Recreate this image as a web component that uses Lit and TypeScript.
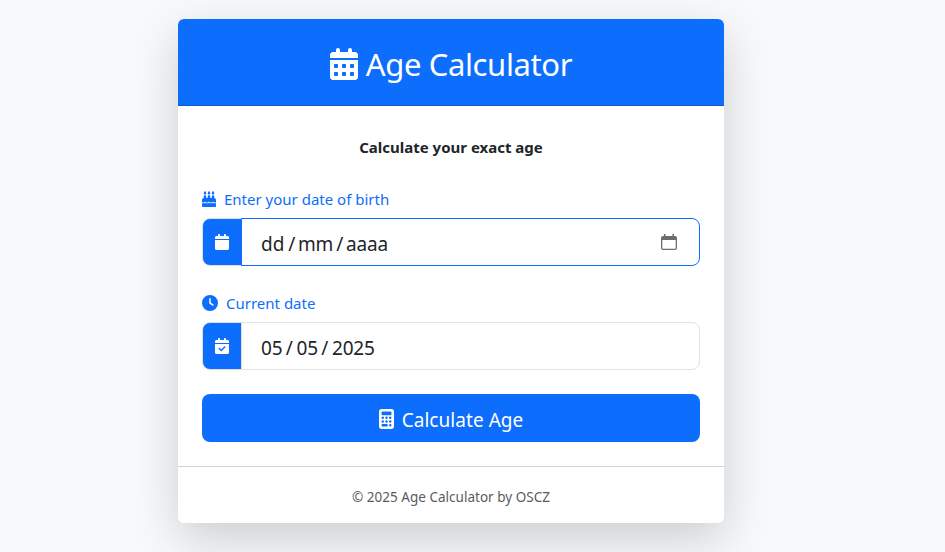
import { LitElement, html, css, svg } from "lit";
import { customElement, property } from "lit/decorators.js";

const calendarTop =
  "M128 0c17.7 0 32 14.3 32 32V64H288V32c0-17.7 14.3-32 32-32s32 14.3 32 32V64h48c26.5 0 48 21.5 48 48v48H0V112C0 85.5 21.5 64 48 64H96V32c0-17.7 14.3-32 32-32z";
const calendarPage = "M0 192H448V464c0 26.5-21.5 48-48 48H48c-26.5 0-48-21.5-48-48V192z";
const cell = (x: number, y: number) =>
  `M${x} ${y + 16}v32c0 8.8 7.2 16 16 16h32c8.8 0 16-7.2 16-16v-32c0-8.8-7.2-16-16-16h-32c-8.8 0-16 7.2-16 16z`;
const dot = (x: number, y: number) => `M${x - 32} ${y}a32 32 0 1 0 64 0a32 32 0 1 0-64 0z`;
const flame = (x: number) =>
  `M${x - 9.6} 5.5L${x - 34.2} 47.6c-3.8 6.5-5.8 14-5.8 21.6V72c0 22.1 17.9 40 40 40s40-17.9 40-40V69.2c0-7.6-2-15-5.8-21.6L${x + 9.6} 5.5C${x + 7.6} 2.1 ${x + 4} 0 ${x} 0s-7.6 2.1-9.6 5.5z`;

const ICONS: Record<string, { w: number; d: string }> = {
  days: {
    w: 448,
    d: calendarTop + calendarPage + [64, 192, 320].map((x) => cell(x, 256) + cell(x, 384)).join(""),
  },
  calendar: { w: 448, d: calendarTop + calendarPage },
  check: {
    w: 448,
    d:
      calendarTop +
      calendarPage +
      "M329 305c9.4-9.4 9.4-24.6 0-33.9s-24.6-9.4-33.9 0l-95 95-47-47c-9.4-9.4-24.6-9.4-33.9 0s-9.4 24.6 0 33.9l64 64c9.4 9.4 24.6 9.4 33.9 0L329 305z",
  },
  clock: {
    w: 512,
    d: "M256 0a256 256 0 1 1 0 512A256 256 0 1 1 256 0zM232 120V256c0 8 4 15.5 10.7 20l96 64c11 7.4 25.9 4.4 33.3-6.7s4.4-25.9-6.7-33.3L280 243.2V120c0-13.3-10.7-24-24-24s-24 10.7-24 24z",
  },
  cake: {
    w: 448,
    d:
      flame(96) +
      flame(224) +
      flame(352) +
      "M136 172c0-20-18-36-40-36s-40 16-40 36v52c-31 4-56 30-56 64v71c8.3 5.2 18.1 9 28.8 9c22 0 42-10 55.2-18.5c6.5-4.5 17.5-4.5 24 0C118 357 139 368 160 368s42-11 52-18.5c6.5-4.5 17.5-4.5 24 0C246 357 267 368 288 368s42-11 52-18.5c6.5-4.5 17.5-4.5 24 0C377 358 397 368 419.2 368c10.7 0 20.5-3.8 28.8-9V288c0-34-25-60-56-64V172c0-20-18-36-40-36s-40 16-40 36v52H264V172c0-20-18-36-40-36s-40 16-40 36v52H136V172z" +
      "M448 390c-8.5 3.3-18.2 5.4-28.8 5.4c-28 0-51-10-67.2-20C336 385 313 395.4 288 395.4s-48-10-64-20C208 385 185 395.4 160 395.4s-48-10-64-20C79.8 385 56.8 395.4 28.8 395.4C18.2 395.4 8.5 393.3 0 390V480c0 17.7 14.3 32 32 32H416c17.7 0 32-14.3 32-32V390z",
  },
  calculator: {
    w: 384,
    d:
      "M64 0C28.7 0 0 28.7 0 64V448c0 35.3 28.7 64 64 64H320c35.3 0 64-28.7 64-64V64c0-35.3-28.7-64-64-64H64zM96 64H288c17.7 0 32 14.3 32 32v32c0 17.7-14.3 32-32 32H96c-17.7 0-32-14.3-32-32V96c0-17.7 14.3-32 32-32z" +
      "M64 416c0-17.7 14.3-32 32-32h96c17.7 0 32 14.3 32 32s-14.3 32-32 32H96c-17.7 0-32-14.3-32-32z" +
      dot(96, 224) + dot(192, 224) + dot(288, 224) + dot(96, 320) + dot(192, 320) + dot(288, 320) + dot(288, 416),
  },
};

@customElement("fa-icon")
export class FaIcon extends LitElement {
  @property() name = "calendar";

  static styles = css`
    :host {
      display: inline-flex;
      flex: none;
      height: 1em;
    }
    svg {
      display: block;
      height: 1em;
      fill: currentColor;
    }
  `;

  render() {
    const icon = ICONS[this.name];
    return html`<svg viewBox="0 0 ${icon.w} 512" width="${icon.w / 512}em" aria-hidden="true">
      ${svg`<path fill-rule="evenodd" d=${icon.d}></path>`}
    </svg>`;
  }
}

@customElement("app-root")
export class AppRoot extends LitElement {
  static styles = css`
    :host {
      display: flow-root;
      box-sizing: border-box;
      height: 552px;
      overflow: hidden;
      background: #f8f9fa;
      color: #212529;
      font-family: "Noto Sans", sans-serif;
      font-size: 16px;
      line-height: 24px;
    }
    * {
      box-sizing: border-box;
    }
    .card {
      width: 546px;
      margin: 19px 0 0 178px;
      background: #fff;
      border-radius: 6px;
      box-shadow: 0 16px 48px rgba(0, 0, 0, 0.175);
      white-space: nowrap;
    }
    .head {
      display: flex;
      justify-content: center;
      align-items: center;
      gap: 8px;
      height: 87px;
      padding-top: 4px;
      border-bottom: 1px solid #0a58ca;
      border-radius: 6px 6px 0 0;
      background: #0d6efd;
      color: #fff;
      font-size: 32px;
    }
    h1 {
      margin: 0;
      font-size: 31px;
      font-weight: 400;
      line-height: 38px;
      letter-spacing: -0.38px;
    }
    .body {
      height: 360px;
      padding: 29px 24px 24px;
    }
    .lead {
      margin: 0 0 28px;
      text-align: center;
      font-size: 15px;
      font-weight: 700;
    }
    .label {
      display: flex;
      align-items: center;
      gap: 8px;
      height: 24px;
      margin-bottom: 7px;
      color: #0d6efd;
    }
    .label span {
      font-size: 15px;
    }
    .group {
      display: flex;
      height: 48px;
      margin-bottom: 25px;
    }
    .group.last {
      margin-bottom: 24px;
    }
    .addon {
      display: flex;
      align-items: center;
      justify-content: center;
      width: 40px;
      margin-right: -1px;
      border: 1px solid #dee2e6;
      border-radius: 8px 0 0 8px;
      background: #0d6efd;
      color: #fff;
    }
    .field {
      display: flex;
      flex: 1;
      align-items: center;
      padding: 3px 21px 0 19px;
      border: 1px solid #dee2e6;
      border-radius: 0 8px 8px 0;
      background: #fff;
      font-size: 19px;
    }
    .field.active {
      border-color: #0d6efd;
    }
    .part {
      width: 24.5px;
    }
    .month {
      width: 35.5px;
      letter-spacing: -0.3px;
    }
    .year {
      letter-spacing: -0.2px;
    }
    .digits {
      width: 23px;
    }
    .slash {
      width: 12.5px;
      text-align: center;
    }
    .digits + .slash {
      padding-right: 2px;
    }
    .picker {
      display: block;
      margin: -4px 0 0 auto;
    }
    .submit {
      display: flex;
      align-items: center;
      justify-content: center;
      gap: 8px;
      width: 100%;
      height: 48px;
      padding: 3px 0 0;
      border: 0;
      border-radius: 8px;
      background: #0d6efd;
      color: #fff;
      font: 20px "Noto Sans", sans-serif;
    }
    .submit fa-icon {
      margin-bottom: 1px;
    }
    .submit span {
      font-size: 19px;
      letter-spacing: 0.05px;
    }
    .foot {
      height: 57px;
      padding-top: 20px;
      border-top: 1px solid #d0d3d4;
      text-align: center;
      color: #595c5f;
      font-size: 13.5px;
      line-height: 21px;
      letter-spacing: 0.02px;
    }
  `;

  render() {
    return html`
      <main class="card">
        <header class="head"><fa-icon name="days"></fa-icon><h1>Age Calculator</h1></header>
        <section class="body">
          <p class="lead">Calculate your exact age</p>
          <div class="label"><fa-icon name="cake"></fa-icon><span>Enter your date of birth</span></div>
          <div class="group">
            <div class="addon"><fa-icon name="calendar"></fa-icon></div>
            <div class="field active">
              <span class="part">dd</span><span class="slash">/</span><span class="month">mm</span
              ><span class="slash">/</span><span class="year">aaaa</span>
              <svg class="picker" width="18" height="18" viewBox="0 0 18 18" aria-hidden="true">
                <path
                  fill="#6b6d70"
                  fill-rule="evenodd"
                  d="M4 1h1.5v2h7V1H14v2h1A2 2 0 0 1 17 5v10a2 2 0 0 1-2 2H3a2 2 0 0 1-2-2V5a2 2 0 0 1 2-2h1zM2.3 7v8q0 .7 .7 .7h12q.7 0 .7-.7V7z"
                />
              </svg>
            </div>
          </div>
          <div class="label"><fa-icon name="clock"></fa-icon><span>Current date</span></div>
          <div class="group last">
            <div class="addon"><fa-icon name="check"></fa-icon></div>
            <div class="field">
              <span class="digits">05</span><span class="slash">/</span><span class="digits">05</span
              ><span class="slash">/</span><span class="year">2025</span>
            </div>
          </div>
          <button class="submit"><fa-icon name="calculator"></fa-icon><span>Calculate Age</span></button>
        </section>
        <footer class="foot">© 2025 Age Calculator by OSCZ</footer>
      </main>
    `;
  }
}
